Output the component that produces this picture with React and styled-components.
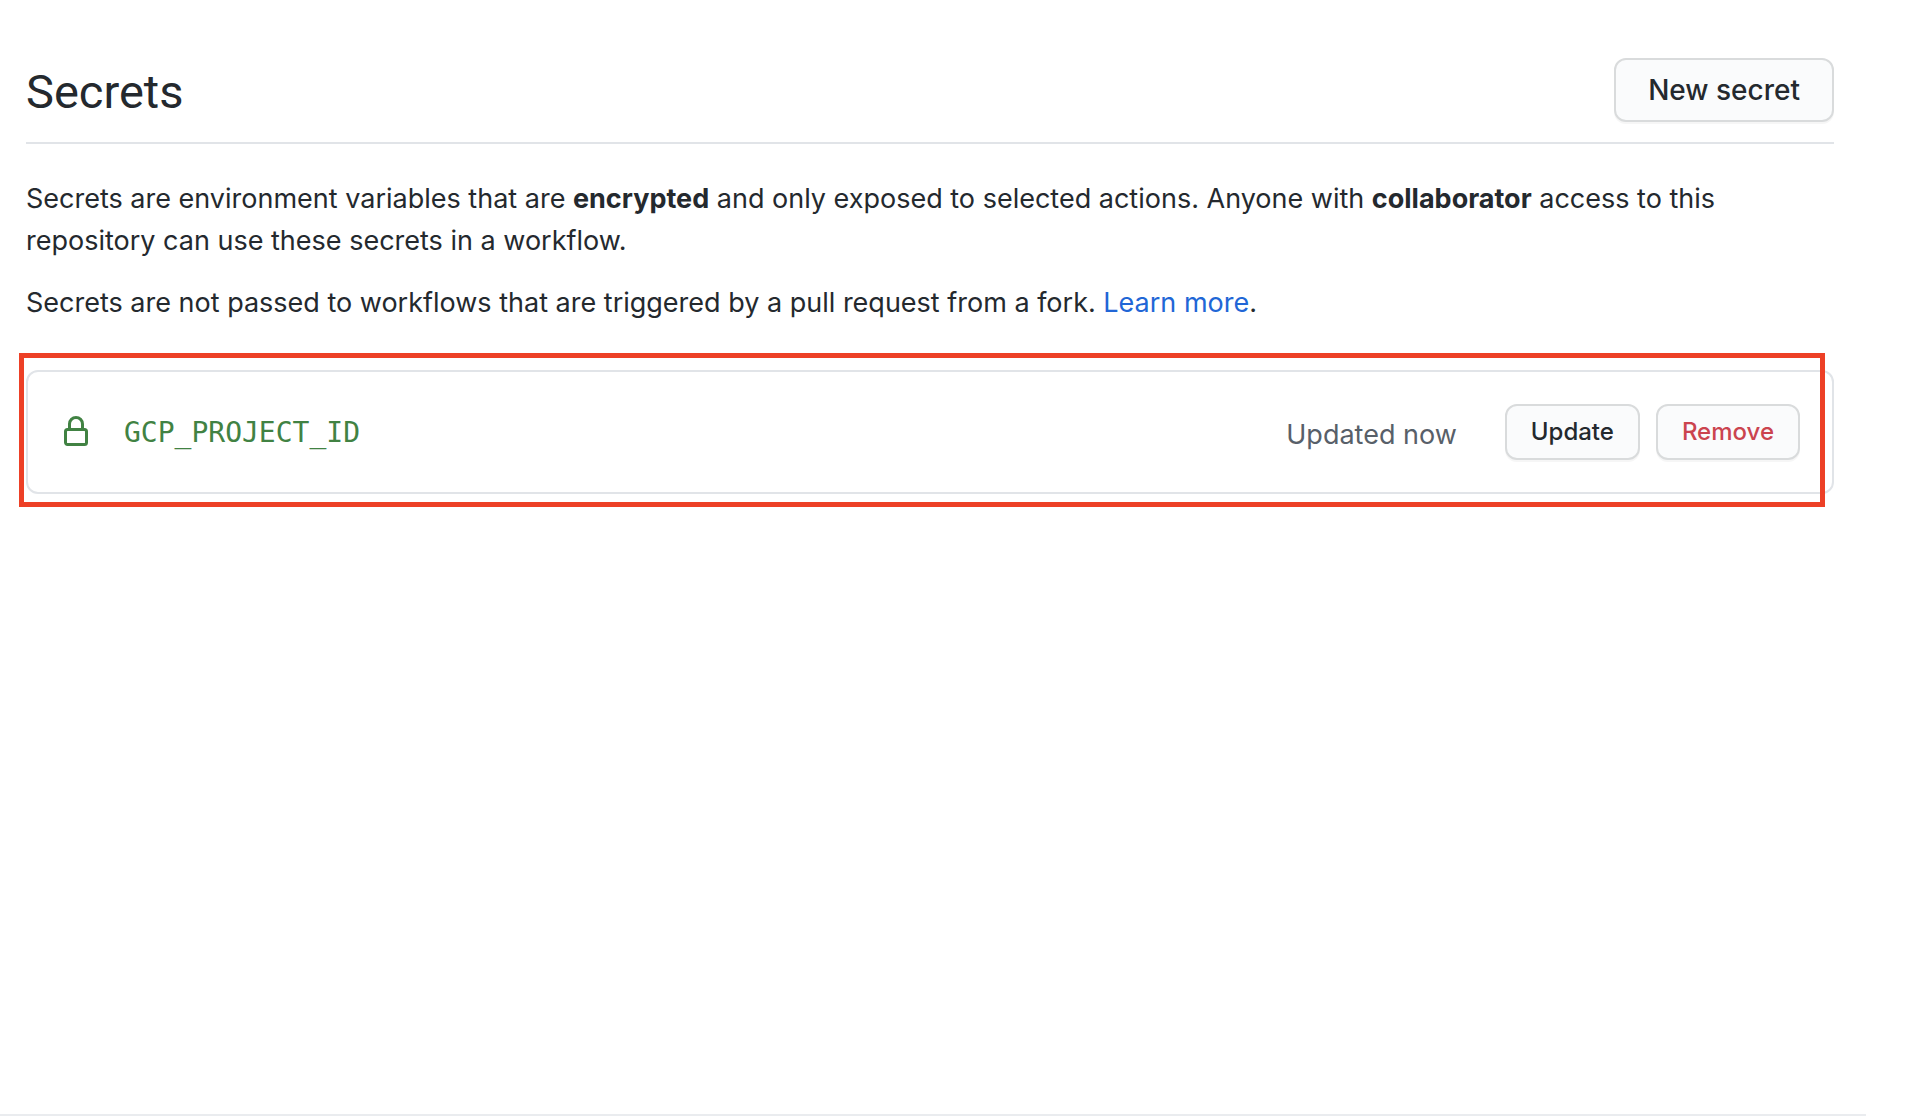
import React from "react";
import styled, { createGlobalStyle } from "styled-components";

const GlobalStyle = createGlobalStyle`
  *, *::before, *::after { box-sizing: border-box; }
  body {
    margin: 0;
    background: #ffffff;
    color: #24292e;
    font-family: Inter, "Liberation Sans", sans-serif;
    font-size: 27px;
    line-height: 42px;
  }
`;

const Page = styled.div`
  display: flex;
  flex-direction: column;
  min-height: 100vh;
  padding-bottom: 4px;
`;

const Main = styled.main`
  flex: 1;
  padding: 58px 80px 40px 26px;
`;

const Header = styled.header`
  display: flex;
  align-items: center;
  justify-content: space-between;
  padding-bottom: 20px;
  margin-bottom: 34px;
  border-bottom: 2px solid #e1e4e8;
`;

const Title = styled.h2`
  margin: 0;
  padding-top: 4px;
  font-family: Roboto, Inter, sans-serif;
  font-size: 47px;
  font-weight: 400;
  line-height: 60px;
`;

const Button = styled.button`
  height: ${(p) => (p.$small ? "56px" : "64px")};
  padding: 0 ${(p) => (p.$small ? "24px" : "32px")};
  border: 2px solid #d9dbdc;
  border-radius: 12px;
  background: #fafbfc;
  box-shadow: 0 2px 0 rgba(27, 31, 35, 0.04);
  color: ${(p) => (p.$danger ? "#cb444f" : "#24292e")};
  font-family: inherit;
  font-size: ${(p) => (p.$small ? "24px" : "28px")};
  font-weight: 500;
  line-height: 40px;
  white-space: nowrap;
  cursor: pointer;
`;

const Paragraph = styled.p`
  margin: 0 0 20px;
`;

const Strong = styled.strong`
  font-weight: 700;
`;

const Link = styled.a`
  color: #2166d6;
  text-decoration: none;
`;

const Highlight = styled.section`
  position: relative;
  margin-top: 46px;

  &::after {
    content: "";
    position: absolute;
    inset: -17px 9px -13px -7px;
    border: 5px solid #ed4026;
    pointer-events: none;
  }
`;

const SecretList = styled.ul`
  margin: 0;
  padding: 0;
  list-style: none;
  border: 2px solid #e1e4e8;
  border-radius: 12px;
`;

const SecretRow = styled.li`
  display: flex;
  align-items: center;
  padding: 32px;
`;

const LockIcon = styled.svg`
  width: 32px;
  height: 32px;
  margin-right: 32px;
  fill: #418243;
`;

const SecretName = styled.code`
  flex: 1;
  padding-top: 2px;
  color: #418243;
  font-family: "DejaVu Sans Mono", monospace;
  font-size: 28px;
`;

const Updated = styled.span`
  margin-right: 48px;
  padding-top: 6px;
  color: #586069;
`;

const Actions = styled.div`
  display: flex;
  gap: 16px;
`;

const FooterRule = styled.hr`
  width: calc(100% - 48px);
  height: 2px;
  margin: 0;
  border: 0;
  background: #eaecef;
`;

const secrets = [{ name: "GCP_PROJECT_ID", updated: "Updated now" }];

export default function App() {
  return (
    <>
      <GlobalStyle />
      <Page>
        <Main>
          <Header>
            <Title>Secrets</Title>
            <Button type="button">New secret</Button>
          </Header>
          <Paragraph>
            Secrets are environment variables that are <Strong>encrypted</Strong> and only exposed to
            selected actions. Anyone with <Strong>collaborator</Strong> access to this
            <br />
            repository can use these secrets in a workflow.
          </Paragraph>
          <Paragraph>
            Secrets are not passed to workflows that are triggered by a pull request from a fork.{" "}
            <Link href="#learn-more">Learn more</Link>.
          </Paragraph>
          <Highlight>
            <SecretList>
              {secrets.map((secret) => (
                <SecretRow key={secret.name}>
                  <LockIcon viewBox="0 0 16 16" aria-hidden="true">
                    <path
                      fillRule="evenodd"
                      d="M4 4v2h-.25A1.75 1.75 0 002 7.75v5.5c0 .966.784 1.75 1.75 1.75h8.5A1.75 1.75 0 0014 13.25v-5.5A1.75 1.75 0 0012.25 6H12V4a4 4 0 10-8 0zm6.5 2V4a2.5 2.5 0 10-5 0v2h5zM12 7.5h.25a.25.25 0 01.25.25v5.5a.25.25 0 01-.25.25h-8.5a.25.25 0 01-.25-.25v-5.5a.25.25 0 01.25-.25H12z"
                    />
                  </LockIcon>
                  <SecretName>{secret.name}</SecretName>
                  <Updated>{secret.updated}</Updated>
                  <Actions>
                    <Button type="button" $small>Update</Button>
                    <Button type="button" $small $danger>Remove</Button>
                  </Actions>
                </SecretRow>
              ))}
            </SecretList>
          </Highlight>
        </Main>
        <FooterRule />
      </Page>
    </>
  );
}
